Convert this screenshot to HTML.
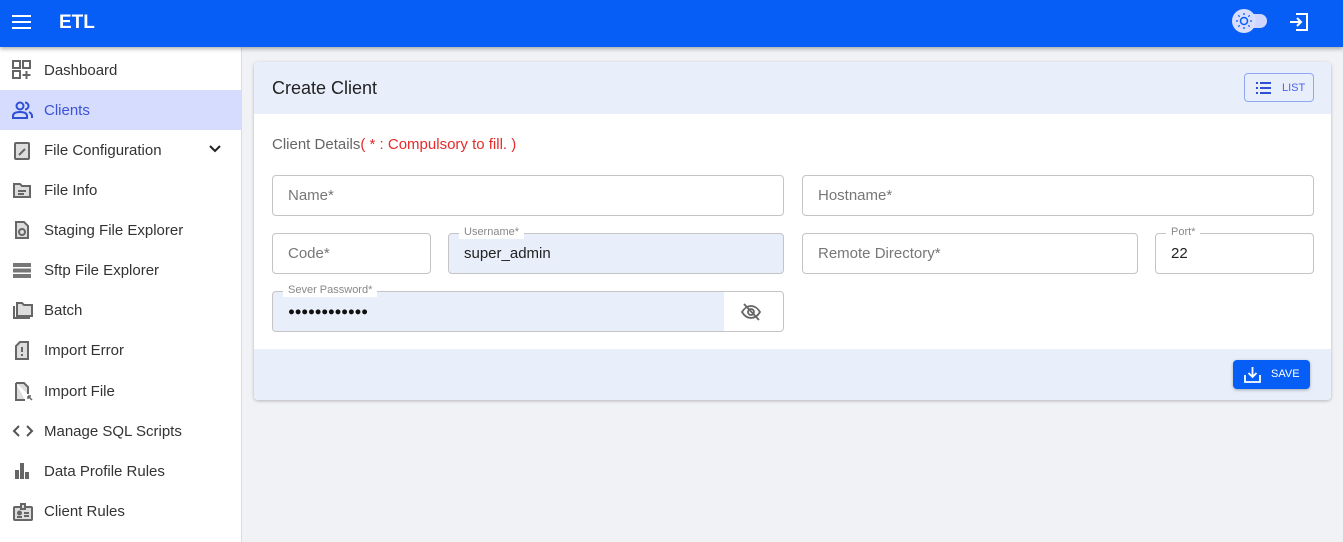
<!DOCTYPE html>
<html><head><style>
*{box-sizing:border-box;margin:0;padding:0}
body{width:1343px;height:542px;overflow:hidden;background:#f1f2f5;font-family:"Liberation Sans",sans-serif;position:relative}
.top{position:absolute;left:0;top:0;width:1343px;height:47px;background:#075ef6;box-shadow:0 2px 4px rgba(0,0,0,.3);z-index:2}
.side{position:absolute;left:0;top:47px;width:242px;height:495px;background:#fff;border-right:1px solid #ddd}
.it{position:absolute;left:0;width:241px;height:40px;display:flex;align-items:center;font-size:15px;color:#333}
.it svg{position:absolute;left:12px;top:10px}
.it span{position:absolute;left:44px;top:12px}
.card{position:absolute;left:254px;top:62px;width:1077px;height:338px;background:#fff;border-radius:4px;box-shadow:0 1px 3px rgba(0,0,0,.25);overflow:hidden}
.f{position:absolute;height:41px;border:1px solid #c4c4c4;border-radius:4px;font-size:15px;color:#777;padding-left:15px;line-height:40px}
.lab{position:absolute;top:-8px;left:10px;font-size:11px;color:#888;background:#fff;padding:0 5px;line-height:13px}
</style></head><body>
<div class="top">
<svg style="position:absolute;left:12px;top:14px" width="20" height="16"><rect y="1" width="19" height="2" fill="#fff"/><rect y="7" width="19" height="2" fill="#fff"/><rect y="13" width="19" height="2" fill="#fff"/></svg>
<div style="position:absolute;left:59px;top:12px;color:#fff;font-size:19px;font-weight:bold">ETL</div>
<div style="position:absolute;left:1236px;top:14px;width:31px;height:14px;border-radius:7px;background:#cfd6ff"></div>
<div style="position:absolute;left:1232px;top:9px;width:24px;height:24px;border-radius:12px;background:#d9deff"></div>
<svg style="position:absolute;left:1236px;top:13px" width="16" height="16"><circle cx="8" cy="8" r="3.5" fill="none" stroke="#075ef6" stroke-width="1.5"/><g stroke="#075ef6" stroke-width="1.3"><path d="M8 0v2M8 14v2M0 8h2M14 8h2M2.3 2.3l1.4 1.4M12.3 12.3l1.4 1.4M2.3 13.7l1.4-1.4M12.3 3.7l1.4-1.4"/></g></svg>
<svg style="position:absolute;left:1289px;top:12px" width="20" height="20" fill="none" stroke="#fff" stroke-width="2"><path d="M7 2h11v16H7M1 10h11M8 6l4 4-4 4"/></svg>
</div>
<div class="side">
<div class="it" style="top:3px"><svg width="20" height="20" fill="#666"><rect x="1" y="1" width="7" height="7" fill="none" stroke="#666" stroke-width="2"/><rect x="11" y="1" width="7" height="7" fill="none" stroke="#666" stroke-width="2"/><rect x="1" y="11" width="7" height="7" fill="none" stroke="#666" stroke-width="2"/><path d="M14.5 11v8M10.5 15h8" stroke="#666" stroke-width="2"/></svg><span>Dashboard</span></div>
<div class="it" style="top:43px;background:#d6dcfd;color:#3b53d6"><svg width="22" height="20" fill="none" stroke="#2f4fd8" stroke-width="2"><circle cx="8" cy="6" r="3.5"/><path d="M1 18v-2c0-3 3-4 7-4s7 1 7 4v2zM13 2.5a3.5 3.5 0 010 7M17 12c2 1 3 2 3 4v2"/></svg><span>Clients</span></div>
<div class="it" style="top:83px"><svg width="20" height="20" fill="#ddd" stroke="#666" stroke-width="2"><rect x="3" y="3" width="14" height="16" rx="1"/><path d="M7 15l6-6" /></svg><span>File Configuration</span><svg style="left:208px;top:14px" width="14" height="10" fill="none" stroke="#222" stroke-width="2"><path d="M2 2l5 5 5-5"/></svg></div>
<div class="it" style="top:123px"><svg width="20" height="20" fill="#ddd" stroke="#666" stroke-width="2"><path d="M2 4h6l2 2h8v11H2z"/><path d="M6 11h8M6 14h6"/></svg><span>File Info</span></div>
<div class="it" style="top:163px"><svg width="20" height="20" fill="#ddd" stroke="#666" stroke-width="2"><path d="M4 2h8l4 4v12H4z"/><circle cx="10" cy="12" r="3" fill="none"/></svg><span>Staging File Explorer</span></div>
<div class="it" style="top:203px"><svg width="20" height="20" fill="#777"><rect x="1" y="3" width="18" height="4"/><rect x="1" y="8.5" width="18" height="4"/><rect x="1" y="14" width="18" height="4"/></svg><span>Sftp File Explorer</span></div>
<div class="it" style="top:243px"><svg width="22" height="20" fill="#ddd" stroke="#666" stroke-width="2"><path d="M5 3h5l2 2h8v11H5z"/><path d="M2 6v12h16" fill="none"/></svg><span>Batch</span></div>
<div class="it" style="top:283px"><svg width="20" height="20" fill="#ddd" stroke="#666" stroke-width="2"><path d="M8 2h8v17H4V6z"/><path d="M10 7v5M10 14v2"/></svg><span>Import Error</span></div>
<div class="it" style="top:324px"><svg width="22" height="20" fill="#ddd" stroke="#666" stroke-width="2"><path d="M4 2h8l4 4v7M13 19H4V2"/><path d="M16 15l4 4M16 15h3M16 15v3" stroke-width="1.5"/></svg><span>Import File</span></div>
<div class="it" style="top:364px"><svg width="22" height="20" fill="none" stroke="#555" stroke-width="2"><path d="M7 5L2 10l5 5M15 5l5 5-5 5"/></svg><span>Manage SQL Scripts</span></div>
<div class="it" style="top:404px"><svg width="20" height="20" fill="#666"><rect x="3" y="9" width="4" height="9"/><rect x="8" y="2" width="4" height="16"/><rect x="13" y="11" width="4" height="7"/></svg><span>Data Profile Rules</span></div>
<div class="it" style="top:444px"><svg width="22" height="20" fill="#ddd" stroke="#666" stroke-width="2"><rect x="2" y="6" width="18" height="13" rx="1"/><path d="M9 3h4v5H9z"/><circle cx="7.5" cy="12" r="1.5" fill="#666"/><path d="M12 12h5M12 15h5M5 16h5"/></svg><span>Client Rules</span></div>
</div>
<div class="card">
<div style="position:absolute;left:0;top:0;width:1077px;height:52px;background:#e8effb"></div>
<div style="position:absolute;left:18px;top:16px;font-size:18px;color:#222">Create Client</div>
<div style="position:absolute;left:990px;top:11px;width:70px;height:29px;border:1px solid #8fa8ef;border-radius:4px;font-size:11px;color:#4d63e8;line-height:28px;padding-left:37px">LIST<svg style="position:absolute;left:11px;top:8px" width="15" height="12" fill="#2f4fd8"><rect y="0" width="2" height="2"/><rect x="4" y="0" width="11" height="2"/><rect y="5" width="2" height="2"/><rect x="4" y="5" width="11" height="2"/><rect y="10" width="2" height="2"/><rect x="4" y="10" width="11" height="2"/></svg></div>
<div style="position:absolute;left:18px;top:74px;font-size:15px;color:#666">Client Details<span style="color:#e52b2b">( * : Compulsory to fill. )</span></div>
<div class="f" style="left:18px;top:113px;width:512px">Name*</div>
<div class="f" style="left:548px;top:113px;width:512px">Hostname*</div>
<div class="f" style="left:18px;top:171px;width:159px">Code*</div>
<div class="f" style="left:194px;top:171px;width:336px;background:#e8effb;color:#222">super_admin<div class="lab">Username*</div></div>
<div class="f" style="left:548px;top:171px;width:336px">Remote Directory*</div>
<div class="f" style="left:901px;top:171px;width:159px;color:#222">22<div class="lab">Port*</div></div>
<div class="f" style="left:18px;top:229px;width:512px;color:#111;background:linear-gradient(90deg,#e8effb 451px,#fff 451px);font-size:11.5px;letter-spacing:-0.3px">●●●●●●●●●●●●<div class="lab" style="font-size:11px;letter-spacing:0;color:#888">Sever Password*</div><svg style="position:absolute;left:468px;top:11px" width="20" height="18" fill="none" stroke="#666" stroke-width="1.8"><path d="M1 9c3-5 6-6 9-6s6 1 9 6c-3 5-6 6-9 6s-6-1-9-6z"/><circle cx="10" cy="9" r="3"/><path d="M3 1l15 16"/></svg></div>
<div style="position:absolute;left:0;top:287px;width:1077px;height:51px;background:#e8effb"></div>
<div style="position:absolute;left:979px;top:298px;width:77px;height:29px;background:#075ef6;border-radius:4px;box-shadow:0 1px 3px rgba(0,0,0,.3);color:#fff;font-size:11px;line-height:29px;padding-left:38px">SAVE<svg style="position:absolute;left:11px;top:6px" width="17" height="17" fill="none" stroke="#fff" stroke-width="1.8"><path d="M1 9v7h15V9M8.5 1v10M4.5 7l4 4 4-4"/></svg></div>
</div>
</body></html>
